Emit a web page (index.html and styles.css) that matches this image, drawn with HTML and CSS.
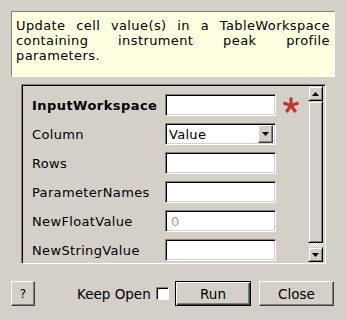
FILE: index.html
```html
<!DOCTYPE html>
<html>
<head>
<meta charset="utf-8">
<link rel="stylesheet" href="styles.css">
</head>
<body>
<div class="desc">Update cell value(s) in a TableWorkspace containing instrument peak profile parameters.</div>
<div class="frame">
  <div class="rows">
    <div class="label bold">InputWorkspace</div>
    <div class="field"><div class="input"></div>
      <svg class="star" width="16" height="16" viewBox="0 0 16 16"><g stroke="#b93a2e" stroke-width="3.2" stroke-linecap="butt"><line x1="8" y1="8.5" x2="8" y2="0.5"/><line x1="8" y1="8.5" x2="15.6" y2="6"/><line x1="8" y1="8.5" x2="12.7" y2="15"/><line x1="8" y1="8.5" x2="3.3" y2="15"/><line x1="8" y1="8.5" x2="0.4" y2="6"/></g></svg>
    </div>
    <div class="label">Column</div>
    <div class="field"><div class="input combo"><span class="val">Value</span><span class="drop"><svg width="7" height="4" viewBox="0 0 7 4"><path d="M0 0H7L3.5 4Z" fill="#000"/></svg></span></div></div>
    <div class="label">Rows</div>
    <div class="field"><div class="input"></div></div>
    <div class="label">ParameterNames</div>
    <div class="field"><div class="input"></div></div>
    <div class="label">NewFloatValue</div>
    <div class="field"><div class="input"><span class="ph">0</span></div></div>
    <div class="label">NewStringValue</div>
    <div class="field"><div class="input"></div></div>
  </div>
  <div class="scroll">
    <div class="sbtn"><svg width="7" height="4" viewBox="0 0 7 4"><path d="M0 4H7L3.5 0Z" fill="#000"/></svg></div>
    <div class="thumb"></div>
    <div class="track"></div>
    <div class="sbtn"><svg width="7" height="4" viewBox="0 0 7 4"><path d="M0 0H7L3.5 4Z" fill="#000"/></svg></div>
  </div>
</div>
<div class="bottom">
  <div class="btn help">?</div>
  <div class="keep">Keep Open <span class="check"></span></div>
  <div class="btn run">Run</div>
  <div class="btn close">Close</div>
</div>
</body>
</html>
```
FILE: styles.css
```css
html, body {
  margin: 0;
  padding: 0;
  background: #d4d0c8;
  font-family: "DejaVu Sans", sans-serif;
  font-size: 13px;
  color: #000;
  width: 346px;
  height: 320px;
  overflow: hidden;
}
.desc {
  margin: 11px 0 0 11px;
  width: 324px;
  height: 66px;
  box-sizing: border-box;
  background: #ffffe1;
  border: 1px solid;
  border-color: #808080 #ffffff #ffffff #808080;
  padding: 6px 4px 0 4px;
  line-height: 15px;
  font-size: 13px;
  letter-spacing: 0.4px;
  text-align: justify;
}
.frame {
  margin: 7px 0 0 21px;
  width: 305px;
  height: 180px;
  box-sizing: border-box;
  border: 1px solid;
  border-color: #808080 #ffffff #ffffff #808080;
  box-shadow: inset 1px 1px #000, inset -1px -1px #d4d0c8;
  display: flex;
  overflow: hidden;
}
.rows {
  flex: 1;
  padding: 9px 0 0 10px;
  display: grid;
  grid-template-columns: 133px 1fr;
  grid-auto-rows: 22px;
  row-gap: 7px;
  align-items: center;
}
.label { white-space: nowrap; font-size: 13px; letter-spacing: 0.35px; }
.bold { font-weight: bold; letter-spacing: 0.45px; }
.field { display: flex; align-items: center; height: 22px; }
.input {
  width: 111px;
  height: 22px;
  box-sizing: border-box;
  background: #fff;
  border: 1px solid;
  border-color: #808080 #ffffff #ffffff #808080;
  box-shadow: inset 1px 1px #000, inset -1px -1px #d4d0c8;
  display: flex;
  align-items: center;
}
.star { margin-left: 7px; }
.combo .val { padding-left: 3px; flex: 1; letter-spacing: 0.3px; }
.drop {
  width: 15px;
  height: 18px;
  margin-right: 2px;
  box-sizing: border-box;
  background: #d4d0c8;
  border: 1px solid;
  border-color: #ffffff #404040 #404040 #ffffff;
  box-shadow: inset -1px -1px #808080;
  display: flex;
  align-items: center;
  justify-content: center;
}
.ph { color: #9a9a9a; padding-left: 5px; }
.scroll {
  width: 15px;
  margin: 1px 2px 1px 0;
  display: flex;
  flex-direction: column;
}
.sbtn {
  height: 15px;
  box-sizing: border-box;
  background: #d4d0c8;
  border: 1px solid;
  border-color: #d4d0c8 #000 #000 #d4d0c8;
  box-shadow: inset 1px 1px #fff, inset -1px -1px #808080;
  display: flex;
  align-items: center;
  justify-content: center;
}
.thumb {
  height: 142px;
  box-sizing: border-box;
  background: #d4d0c8;
  border: 1px solid;
  border-color: #d4d0c8 #000 #000 #d4d0c8;
  box-shadow: inset 1px 1px #fff, inset -1px -1px #808080;
}
.track {
  flex: 1;
  background-color: #fff;
  background-image: repeating-conic-gradient(#d4d0c8 0 25%, #ffffff 0 50%);
  background-size: 2px 2px;
}
.bottom {
  display: flex;
  align-items: center;
  margin: 17px 0 0 11px;
  height: 25px;
}
.btn {
  height: 25px;
  box-sizing: border-box;
  background: #d4d0c8;
  border: 1px solid;
  border-color: #ffffff #404040 #404040 #ffffff;
  box-shadow: inset -1px -1px #808080;
  display: flex;
  align-items: center;
  justify-content: center;
  font-size: 13.5px;
}
.help { width: 24px; font-size: 12px; }
.keep {
  margin-left: 42px;
  width: 98px;
  display: flex;
  align-items: center;
  font-size: 13.5px;
}
.check {
  display: inline-block;
  width: 13px;
  height: 13px;
  box-sizing: border-box;
  background: #fff;
  border: 1px solid;
  border-color: #808080 #ffffff #ffffff #808080;
  box-shadow: inset 1px 1px #000;
  margin-left: auto;
  margin-right: 6px;
}
.run {
  width: 76px;
  border: 1px solid #000;
  box-shadow: inset 1px 1px #fff, inset -1px -1px #404040, inset -2px -2px #808080;
}
.close { width: 75px; margin-left: 8px; }
```
